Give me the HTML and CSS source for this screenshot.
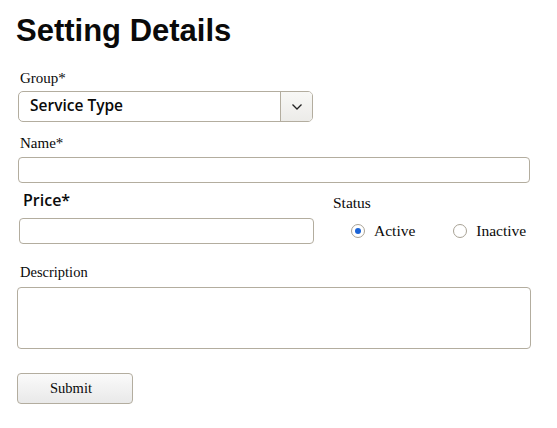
FILE: index.html
```html
<!DOCTYPE html>
<html>
<head>
<meta charset="utf-8">
<link rel="stylesheet" href="styles.css">
</head>
<body>
<div class="page">
  <h1 class="title">Setting Details</h1>
  <div class="label label-group">Group*</div>
  <div class="select">
    <div class="select-value">Service Type</div>
    <div class="select-btn">
      <svg width="12" height="8" viewBox="0 0 12 8"><path d="M1.5 1.5 L6 6 L10.5 1.5" fill="none" stroke="#222" stroke-width="1.3"/></svg>
    </div>
  </div>
  <div class="label label-name">Name*</div>
  <div class="input input-name"></div>
  <div class="row">
    <div class="col-left">
      <div class="label-sans">Price*</div>
      <div class="input input-price"></div>
    </div>
    <div class="col-right">
      <div class="label label-status">Status</div>
      <div class="radios">
        <div class="radio-item"><span class="radio checked"></span><span class="radio-text">Active</span></div>
        <div class="radio-item"><span class="radio"></span><span class="radio-text">Inactive</span></div>
      </div>
    </div>
  </div>
  <div class="label label-desc">Description</div>
  <div class="textarea"></div>
  <div class="button">Submit</div>
</div>
</body>
</html>
```

FILE: styles.css
```css
html, body {
  margin: 0;
  padding: 0;
  background: #ffffff;
}
.page {
  padding: 0 0 0 18px;
  width: 513px;
  display: flex;
  flex-direction: column;
  align-items: flex-start;
}
.title {
  margin: 13px 0 0 -2px;
  font-family: "Liberation Sans", Arial, sans-serif;
  font-weight: bold;
  font-size: 31px;
  line-height: 36px;
  color: #0a0a0a;
}
.label {
  font-family: "Liberation Serif", "Times New Roman", serif;
  font-size: 15px;
  line-height: 16px;
  color: #0a0a0a;
  margin-left: 2px;
}
.label-group { margin-top: 21px; }
.select {
  margin-top: 5px;
  width: 295px;
  height: 31px;
  box-sizing: border-box;
  border: 1.5px solid #b3ad9f;
  border-radius: 5px;
  display: flex;
  background: #fff;
}
.select-value {
  flex: 1;
  font-family: "Open Sans", "Noto Sans", sans-serif;
  font-weight: 600;
  font-size: 15.5px;
  line-height: 27px;
  padding-left: 11px;
  color: #0a0a0a;
}
.select-btn {
  width: 31px;
  border-left: 1.5px solid #b3ad9f;
  background: linear-gradient(#f8f8f6, #ecebe8);
  border-radius: 0 4px 4px 0;
  display: flex;
  align-items: center;
  justify-content: center;
}
.label-name { margin-top: 13px; }
.input {
  box-sizing: border-box;
  border: 1.5px solid #b3ad9f;
  border-radius: 4px;
  background: #fff;
}
.input-name {
  margin-top: 6px;
  width: 512px;
  height: 26px;
}
.row {
  display: flex;
  margin-top: 8px;
}
.col-left {
  width: 315px;
  display: flex;
  flex-direction: column;
  align-items: flex-start;
}
.label-sans {
  font-family: "Open Sans", "Noto Sans", sans-serif;
  font-weight: 600;
  font-size: 16px;
  line-height: 18px;
  color: #0a0a0a;
  margin-left: 5px;
}
.input-price {
  margin-top: 9px;
  margin-left: 1px;
  width: 295px;
  height: 26px;
}
.col-right {
  display: flex;
  flex-direction: column;
  align-items: flex-start;
}
.label-status { margin-top: 4px; margin-left: 0; font-size: 15.5px; }
.radios {
  display: flex;
  margin-top: 11px;
  margin-left: 18px;
  gap: 38px;
}
.radio-item {
  display: flex;
  align-items: center;
  gap: 9px;
}
.radio {
  width: 14px;
  height: 14px;
  box-sizing: border-box;
  border-radius: 50%;
  border: 1.5px solid #a8a295;
  background: #fff;
  position: relative;
}
.radio.checked::after {
  content: "";
  position: absolute;
  left: 2.5px;
  top: 2.5px;
  width: 6px;
  height: 6px;
  border-radius: 50%;
  background: #1a63d6;
}
.radio-text {
  font-family: "Liberation Serif", "Times New Roman", serif;
  font-size: 15.5px;
  line-height: 18px;
  color: #0a0a0a;
}
.label-desc { margin-top: 20px; font-size: 14.5px; }
.textarea {
  margin-top: 7px;
  margin-left: -1px;
  width: 514px;
  height: 62px;
  box-sizing: border-box;
  border: 1.5px solid #b3ad9f;
  border-radius: 4px;
}
.button {
  margin-top: 24px;
  margin-left: -1px;
  width: 116px;
  height: 31px;
  box-sizing: border-box;
  padding-right: 8px;
  border: 1.5px solid #b3ad9f;
  border-radius: 4px;
  background: linear-gradient(#fafafa, #e9e9e9);
  font-family: "Liberation Serif", "Times New Roman", serif;
  font-size: 14.5px;
  line-height: 28px;
  text-align: center;
  color: #0a0a0a;
}
```
